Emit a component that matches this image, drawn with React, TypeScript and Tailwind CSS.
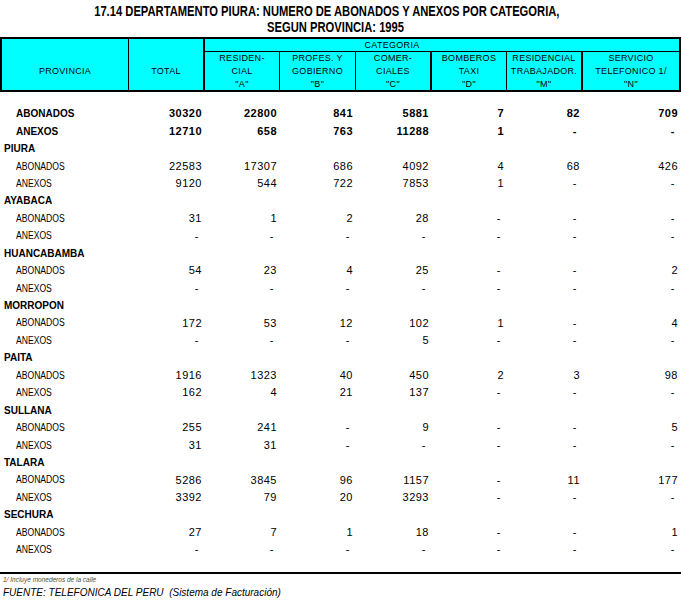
import React from 'react';

type Row = { name: string; ab: string[]; an: string[] };

const totals = {
  ab: ['30320', '22800', '841', '5881', '7', '82', '709'],
  an: ['12710', '658', '763', '11288', '1', '-', '-'],
};

const dashes = ['-', '-', '-', '-', '-', '-', '-'];

const provincias: Row[] = [
  { name: 'PIURA', ab: ['22583', '17307', '686', '4092', '4', '68', '426'], an: ['9120', '544', '722', '7853', '1', '-', '-'] },
  { name: 'AYABACA', ab: ['31', '1', '2', '28', '-', '-', '-'], an: dashes },
  { name: 'HUANCABAMBA', ab: ['54', '23', '4', '25', '-', '-', '2'], an: dashes },
  { name: 'MORROPON', ab: ['172', '53', '12', '102', '1', '-', '4'], an: ['-', '-', '-', '5', '-', '-', '-'] },
  { name: 'PAITA', ab: ['1916', '1323', '40', '450', '2', '3', '98'], an: ['162', '4', '21', '137', '-', '-', '-'] },
  { name: 'SULLANA', ab: ['255', '241', '-', '9', '-', '-', '5'], an: ['31', '31', '-', '-', '-', '-', '-'] },
  { name: 'TALARA', ab: ['5286', '3845', '96', '1157', '-', '11', '177'], an: ['3392', '79', '20', '3293', '-', '-', '-'] },
  { name: 'SECHURA', ab: ['27', '7', '1', '18', '-', '-', '1'], an: dashes },
];

const grid = 'grid grid-cols-[129px_76px_75px_76px_76px_75px_76px_98px] h-[17.44px] items-center';

const DataRow = ({ label, values, bold }: { label: string; values: string[]; bold?: boolean }) => (
  <div className={grid}>
    <div className="pl-[16px] text-[10px] whitespace-nowrap">
      {bold ? (
        <span className="font-bold">{label}</span>
      ) : (
        <span className="inline-block origin-left scale-x-[0.86]">{label}</span>
      )}
    </div>
    {values.map((v, i) => (
      <div
        key={i}
        className={`text-right text-[11px] tracking-[0.5px] ${bold ? 'font-bold' : ''} ${v === '-' ? 'pr-[6px]' : 'pr-[3px]'}`}
      >
        {v}
      </div>
    ))}
  </div>
);

const Province = ({ row }: { row: Row }) => (
  <>
    <div className="h-[17.44px] flex items-center pl-[4px] text-[10px] font-bold">{row.name}</div>
    <DataRow label="ABONADOS" values={row.ab} />
    <DataRow label="ANEXOS" values={row.an} />
  </>
);

const SubHead = ({ lines, className }: { lines: string[]; className: string }) => (
  <div className={`${className} text-center leading-[13px]`}>
    {lines.map((l) => (
      <div key={l} className="whitespace-nowrap">{l}</div>
    ))}
  </div>
);

export default function App() {
  return (
    <div className="w-[681px] h-[601px] bg-white text-black font-['Liberation_Sans',Arial,sans-serif] overflow-hidden">
      <div className="pt-[3px] h-[37px] text-center font-bold text-[14px] leading-[16px] whitespace-nowrap">
        <div className="pr-[27px]">
          <span className="inline-block scale-x-[0.8]">17.14 DEPARTAMENTO PIURA: NUMERO DE ABONADOS Y ANEXOS POR CATEGORIA,</span>
        </div>
        <div className="pr-[10px]">
          <span className="inline-block scale-x-[0.8]">SEGUN PROVINCIA: 1995</span>
        </div>
      </div>

      <div className="flex h-[55px] border-2 border-black bg-[#00ffff] text-[9px] tracking-[0.3px]">
        <div className="w-[127px] border-r border-black text-center pt-[26px] leading-[13px]">PROVINCIA</div>
        <div className="w-[76px] border-r-2 border-black text-center pt-[26px] leading-[13px]">TOTAL</div>
        <div className="flex-1 flex flex-col">
          <div className="h-[13px] border-b border-black leading-[12px]">
            <div className="w-[374px] text-center">CATEGORIA</div>
          </div>
          <div className="flex flex-1">
            <SubHead className="w-[75px] border-r border-black" lines={['RESIDEN-', 'CIAL', '"A"']} />
            <SubHead className="w-[76px] border-r border-black" lines={['PROFES. Y', 'GOBIERNO', '"B"']} />
            <SubHead className="w-[76px] border-r-2 border-black" lines={['COMER-', 'CIALES', '"C"']} />
            <SubHead className="w-[75px] border-r border-black" lines={['BOMBEROS', 'TAXI', '"D"']} />
            <SubHead className="w-[76px] border-r-2 border-black" lines={['RESIDENCIAL', 'TRABAJADOR.', '"M"']} />
            <SubHead className="flex-1" lines={['SERVICIO', 'TELEFONICO 1/', '"N"']} />
          </div>
        </div>
      </div>

      <div className="pt-[13px]">
        <DataRow label="ABONADOS" values={totals.ab} bold />
        <DataRow label="ANEXOS" values={totals.an} bold />
        {provincias.map((p) => (
          <Province key={p.name} row={p} />
        ))}
      </div>

      <div className="mt-[14px] border-t-2 border-black pt-[2px]">
        <div className="pl-[3px] text-[6.5px] italic leading-[8px] text-[#4d4d3a]">1/ Incluye monederos de la calle</div>
        <div className="pl-[3px] pt-[3px] text-[10px] italic leading-[12px]">
          FUENTE: TELEFONICA DEL PERU&nbsp;&nbsp;(Sistema de Facturación)
        </div>
      </div>
    </div>
  );
}
